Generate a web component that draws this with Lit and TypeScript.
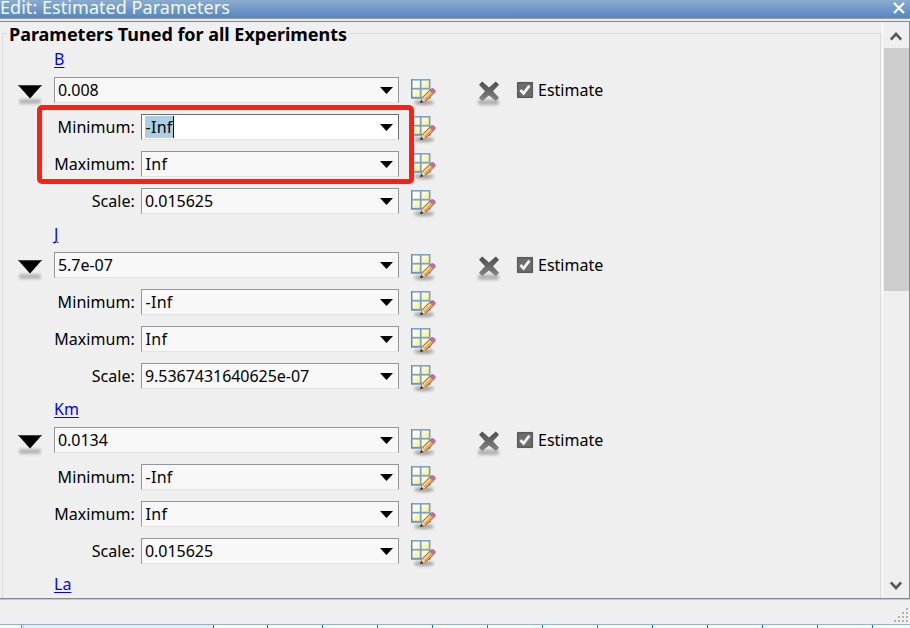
import { LitElement, html, svg, css, nothing } from "lit";
import { customElement, property } from "lit/decorators.js";
import { classMap } from "lit/directives/class-map.js";

interface Param {
  name: string;
  value: string;
  scale: string;
}

const PARAMS: Param[] = [
  { name: "B", value: "0.008", scale: "0.015625" },
  { name: "J", value: "5.7e-07", scale: "9.5367431640625e-07" },
  { name: "Km", value: "0.0134", scale: "0.015625" },
];

@customElement("combo-field")
class ComboField extends LitElement {
  @property() value = "";
  @property({ type: Boolean }) active = false;

  static styles = css`
    :host { display: block; }
    .box {
      box-sizing: border-box; height: 26px; display: flex; align-items: center;
      justify-content: space-between; padding: 0 5px 0 3px; background: #f8f8f8;
      border: 1px solid #969696; border-bottom-color: #e3e3e3;
    }
    .box.active { background: #fff; border-color: #6e6e6e; border-bottom-color: #e3e3e3; }
    .text { line-height: 22px; height: 22px; white-space: pre; letter-spacing: -.04px; }
    .word { letter-spacing: .3px; padding-left: .5px; }
    .active .text { background: #a9d0e4; border-right: 1px solid #000; padding-right: .5px; }
    svg { display: block; flex: none; margin-top: 1px; }
  `;

  render() {
    return html`<div class=${classMap({ box: true, active: this.active })}>
      <span class=${classMap({ text: true, word: this.value.endsWith("Inf") })}>${this.value}</span>
      <svg width="13" height="7" viewBox="0 0 13 7"><path d="M0 0H13L6.5 7Z" /></svg>
    </div>`;
  }
}

@customElement("edit-icon")
class EditIcon extends LitElement {
  static styles = css`
    :host { display: block; width: 26px; height: 32px; }
    svg { display: block; }
  `;

  render() {
    return html`<svg width="26" height="32" viewBox="0 0 26 32">
      <defs>
        <linearGradient id="y" x1="0" y1="0" x2="1" y2="1">
          <stop offset="0" stop-color="#fffde0" /><stop offset="1" stop-color="#fbee94" />
        </linearGradient>
        <linearGradient id="w" x1="0" y1="0" x2="1" y2="1">
          <stop offset="0" stop-color="#fff" /><stop offset="1" stop-color="#fdf8cf" />
        </linearGradient>
        <filter id="s" x="-30%" y="-60%" width="160%" height="220%"><feGaussianBlur stdDeviation="1.6" /></filter>
      </defs>
      <ellipse cx="14" cy="25.6" rx="10" ry="2.6" fill="#000" opacity=".3" filter="url(#s)" />
      <rect x="1" y="2" width="19.5" height="19.5" fill="#7ba3c6" />
      <path d="M1 2H2V21.5H1ZM1 20.5H20.5V21.5H1Z" fill="#5f8bb2" />
      <rect x="2.6" y="3.6" width="7.2" height="7.2" fill="url(#w)" />
      <rect x="11.6" y="3.6" width="7.2" height="7.2" fill="url(#y)" />
      <rect x="2.6" y="12.6" width="7.2" height="7.2" fill="url(#y)" />
      <rect x="11.6" y="12.6" width="7.2" height="7.2" fill="url(#y)" />
      <g transform="translate(0 .8)">
        <path d="M10.6 24.8L12.4 19.6L19.8 12.4L23.6 16L15.6 23.4Z" fill="#e5a45c" stroke="#8f6236" stroke-width=".9" />
        <path d="M13.8 20.6L20.8 13.8" stroke="#f9d39b" stroke-width="1.6" />
        <path d="M10.4 25L12.4 19.8L15.4 23.4Z" fill="#edd6ae" />
        <path d="M10 25.4L11.2 22.2L13.6 24.2Z" fill="#3d3021" />
        <path d="M18.8 13.3L20 12.2L23.9 15.8L22.8 16.8Z" fill="#a7a9b4" />
        <path d="M20 12.2L21.6 10.8Q23 10.2 24.6 11.8Q25.7 13.4 25 14.6L23.8 15.8Z" fill="#cf6a95" stroke="#9c4c72" stroke-width=".5" />
      </g>
    </svg>`;
  }
}

@customElement("param-section")
class ParamSection extends LitElement {
  @property({ attribute: false }) param!: Param;
  @property({ type: Boolean }) focusMin = false;
  @property({ type: Boolean }) collapsed = false;

  static styles = css`
    :host { display: block; }
    .name { height: 27px; box-sizing: border-box; line-height: 27px; padding: 1px 0 0 54px; }
    .link { color: #00f; text-decoration: underline; text-underline-offset: 2px; text-decoration-thickness: 1px; }
    .row { height: 37px; box-sizing: border-box; padding-top: 5px; display: flex; align-items: flex-start; }
    .toggle { width: 36px; margin-left: 18px; flex: none; }
    .toggle svg, .remove svg, .check { display: block; }
    .wide { width: 345px; }
    .label { width: 135px; text-align: right; flex: none; margin-right: 6px; line-height: 26px; letter-spacing: .08px; }
    .narrow { width: 258px; }
    edit-icon { margin-left: 11px; }
    .remove { margin: 2px 0 0 40px; }
    .check { margin: 4px 0 0 14px; }
    .estimate { margin-left: 4px; line-height: 26px; }
  `;

  private bound(label: string, value: string, active = false) {
    return html`<div class="row">
      <span class="label">${label}</span>
      <combo-field class="narrow" .value=${value} ?active=${active}></combo-field>
      <edit-icon></edit-icon>
    </div>`;
  }

  render() {
    return html`
      <div class="name"><span class="link">${this.param.name}</span></div>
      ${this.collapsed ? nothing : html`<div class="row">
        <div class="toggle">
          <svg width="25" height="30" viewBox="0 0 25 30">
            <defs><filter id="b" x="-20%" y="-60%" width="140%" height="220%"><feGaussianBlur stdDeviation="1.4" /></filter></defs>
            <rect x="1" y="22" width="22" height="5" rx="2" fill="#000" opacity=".24" filter="url(#b)" />
            <path d="M0 8H24L12 21.5Z" fill="#000" /><path d="M0 8.5H24" stroke="#3d4641" />
          </svg>
        </div>
        <combo-field class="wide" .value=${this.param.value}></combo-field>
        <edit-icon></edit-icon>
        <div class="remove">
          <svg width="26" height="29" viewBox="0 0 26 29">
            <defs>
              <filter id="x" x="-20%" y="-60%" width="140%" height="220%"><feGaussianBlur stdDeviation="1.6" /></filter>
              <filter id="e"><feGaussianBlur stdDeviation=".5" /></filter>
              <linearGradient id="g" x1="0" y1="0" x2="0" y2="1"><stop offset="0" stop-color="#4c4c4c" /><stop offset="1" stop-color="#858585" /></linearGradient>
            </defs>
            <rect x="2" y="20.5" width="21" height="5.5" rx="2" fill="#000" opacity=".25" filter="url(#x)" />
            <path d="M3 5.8L6.2 2.6L13 8.4L19.8 2.6L23 5.8L17 12.3L23 18.8L19.8 22L13 16.4L6.2 22L3 18.8L9 12.3Z" fill="url(#g)" filter="url(#e)" />
          </svg>
        </div>
        <svg class="check" width="18" height="18" viewBox="0 0 18 18">
          <rect x=".5" y=".5" width="17" height="17" fill="#dedede" />
          <rect x="1.7" y="1.7" width="14.6" height="14.6" fill="#6d6d6d" stroke="#505050" stroke-width="1.2" />
          <path d="M4.4 9L7.6 12.4L13.4 4.6" fill="none" stroke="#f2f2f2" stroke-width="2.7" />
        </svg>
        <span class="estimate">Estimate</span>
      </div>
      ${this.bound("Minimum:", "-Inf", this.focusMin)}
      ${this.bound("Maximum:", "Inf")}
      ${this.bound("Scale:", this.param.scale)}`}
    `;
  }
}

@customElement("app-root")
class AppRoot extends LitElement {
  static styles = css`
    :host {
      display: flex; flex-direction: column; position: relative; width: 910px; height: 628px;
      overflow: hidden; background: #efefef; color: #000;
      font: 16px "Noto Sans", "Open Sans", sans-serif;
    }
    .title {
      height: 18px; flex: none; display: flex; justify-content: space-between; align-items: center;
      background: linear-gradient(#8baccf, #5487c0); color: #f4f8fc; font-size: 18px; line-height: 18px;
      white-space: nowrap;
    }
    .caption { margin-top: -4px; letter-spacing: .05px; }
    .title svg { margin: -2px 5px 0 0; }
    .edge { height: 4px; flex: none; background: linear-gradient(#9a9a9c 0 1px, #e2edf6 1px 3px, #858793 3px); box-sizing: border-box; }
    .body { height: 576px; flex: none; display: flex; overflow: hidden; border-right: 1px solid #858793; }
    .panel { width: 881px; box-sizing: border-box; overflow: hidden; flex: none; padding-left: 2px; }
    .group { border: 1px solid #dcdcdc; margin: 11px 0 0; height: 640px; box-sizing: border-box; }
    .heading {
      display: block; width: max-content; margin: -12px 0 0 4px; padding: 0 3px 0 2px; height: 23px; line-height: 25px;
      background: #efefef; font-size: 18px; font-weight: 700; letter-spacing: -.02px;
    }
    .list { margin-left: -3px; }
    .bar { margin-left: 1px; width: 26px; border-left: 1px solid #fff; display: flex; flex-direction: column; justify-content: space-between; align-items: center; }
    .thumb { width: 25px; height: 243px; background: #cdcdcd; }
    .top { display: flex; flex-direction: column; align-items: center; }
    .arrow { height: 26px; box-sizing: border-box; padding: 2px 0 0; display: flex; align-items: center; }
    .status { height: 26px; flex: none; box-sizing: border-box; border-top: 1px solid #858793; box-shadow: inset 0 1px #bcc9d7; display: flex; justify-content: flex-end; align-items: flex-end; padding: 0 2px 2px 0; }
    .under { height: 4px; flex: none; background: #fff; border-top: 1px solid #8fb3d4; box-sizing: border-box; }
    .under svg { display: block; }
    .marker { position: absolute; left: 37px; top: 105px; width: 377px; height: 79px; box-sizing: border-box; border: 5px solid #ff2013; border-radius: 5px; }
  `;

  render() {
    const dots = [[12, 0], [8, 4], [12, 4], [4, 8], [8, 8], [12, 8], [0, 12], [4, 12], [8, 12], [12, 12]];
    const ticks = [267, 322, 377, 432, 487, 542, 597, 652, 707, 762, 817, 872];
    return html`
      <div class="title">
        <span class="caption">Edit: Estimated Parameters</span>
        <svg width="12" height="12" viewBox="0 0 12 12"><path d="M1 1L11 11M11 1L1 11" stroke="#fff" stroke-width="2.2" /></svg>
      </div>
      <div class="edge"></div>
      <div class="body">
        <div class="panel">
          <div class="group">
            <span class="heading">Parameters Tuned for all Experiments</span>
            <div class="list">
              ${PARAMS.map((p, i) => html`<param-section .param=${p} .focusMin=${i === 0}></param-section>`)}
              <param-section collapsed .param=${{ name: "La", value: "", scale: "" }}></param-section>
            </div>
          </div>
        </div>
        <div class="bar">
          <div class="top">
            <div class="arrow"><svg width="12" height="10" viewBox="0 0 12 10"><path d="M.8 8.5L6 3L11.2 8.5" fill="none" stroke="#595959" stroke-width="2.6" /></svg></div>
            <div class="thumb"></div>
          </div>
          <div class="arrow"><svg width="12" height="10" viewBox="0 0 12 10"><path d="M.8 1.5L6 7L11.2 1.5" fill="none" stroke="#595959" stroke-width="2.6" /></svg></div>
        </div>
      </div>
      <div class="status">
        <svg width="14" height="14" viewBox="0 0 14 14">${dots.map(([x, y]) => svg`<rect x=${x} y=${y} width="2" height="2" fill="#b5b5a3" />`)}</svg>
      </div>
      <div class="under">
        <svg width="910" height="3" viewBox="0 0 910 3">
          <rect x="21" width="192" height="3" fill="#efefef" />
          <rect x="21" width="1" height="3" fill="#8a8a8a" /><rect x="23" width="1" height="3" fill="#c8c8c8" />
          <rect x="213" width="1" height="3" fill="#555" />
          ${ticks.map((x) => svg`<rect x=${x} width="1" height="3" fill="#0b78b8" />`)}
        </svg>
      </div>
      <div class="marker"></div>
    `;
  }
}
